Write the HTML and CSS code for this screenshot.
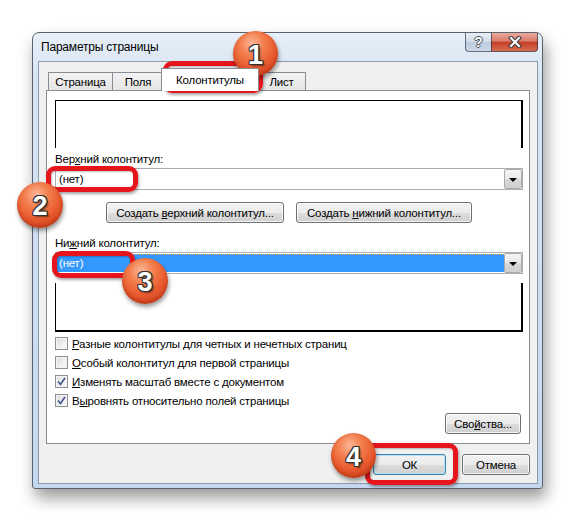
FILE: index.html
```html
<!DOCTYPE html>
<html lang="ru">
<head>
    <meta charset="UTF-8">
    <title>Параметры страницы</title>
    <link rel="stylesheet" href="styles.css">
</head>
<body>
    <div class="window">
        <div class="titlebar">
            <span class="title">Параметры страницы</span>
            <div class="caption-buttons">
                <button class="cap-btn help">?</button>
                <button class="cap-btn close">
                    <svg width="16" height="12" viewBox="0 0 16 12">
                        <path d="M4 2 L12 10 M12 2 L4 10" stroke="#3b3b3b" stroke-width="4.2" stroke-linecap="square"/>
                        <path d="M4 2 L12 10 M12 2 L4 10" stroke="#fff" stroke-width="2.2" stroke-linecap="square"/>
                    </svg>
                </button>
            </div>
        </div>
        <div class="client">
            <div class="tabs">
                <div class="tab tab-page">Страница</div>
                <div class="tab tab-fields">Поля</div>
                <div class="tab tab-hf active">Колонтитулы</div>
                <div class="tab tab-sheet">Лист</div>
            </div>
            <div class="panel">
                <div class="preview preview-top"></div>
                <div class="field-label">Вер<u>х</u>ний колонтитул:</div>
                <div class="select">
                    <span class="select-value">(нет)</span>
                    <span class="drop"></span>
                </div>
                <div class="create-row">
                    <button class="btn btn-create-top">Создать <u>в</u>ерхний колонтитул...</button>
                    <button class="btn btn-create-bottom">Создать <u>н</u>ижний колонтитул...</button>
                </div>
                <div class="field-label field-label-bottom">Ни<u>ж</u>ний колонтитул:</div>
                <div class="select focused">
                    <span class="select-value">(нет)</span>
                    <span class="drop"></span>
                </div>
                <div class="preview preview-bottom"></div>
                <div class="checks">
                    <div class="check"><span class="box"></span><span><u>Р</u>азные колонтитулы для четных и нечетных страниц</span></div>
                    <div class="check"><span class="box"></span><span><u>О</u>собый колонтитул для первой страницы</span></div>
                    <div class="check"><span class="box checked"><svg width="9" height="9" viewBox="0 0 9 9"><path d="M1 4.5 L3.5 7.5 L8 1" fill="none" stroke="#3d5589" stroke-width="1.6"/></svg></span><span><u>И</u>зменять масштаб вместе с документом</span></div>
                    <div class="check"><span class="box checked"><svg width="9" height="9" viewBox="0 0 9 9"><path d="M1 4.5 L3.5 7.5 L8 1" fill="none" stroke="#3d5589" stroke-width="1.6"/></svg></span><span>В<u>ы</u>ровнять относительно полей страницы</span></div>
                </div>
                <button class="btn btn-props">Сво<u>й</u>ства...</button>
            </div>
            <div class="footer">
                <button class="btn btn-ok">ОК</button>
                <button class="btn btn-cancel">Отмена</button>
            </div>
        </div>
    </div>

    <!-- callouts drawn over the dialog -->
    <div class="mark mark-1"></div>
    <div class="mark mark-2"></div>
    <div class="mark mark-3"></div>
    <div class="mark mark-4"></div>
    <div class="badge badge-1">1</div>
    <div class="badge badge-2">2</div>
    <div class="badge badge-3">3</div>
    <div class="badge badge-4">4</div>
</body>
</html>
```

FILE: styles.css
```css
* {
    box-sizing: border-box;
}
html, body {
    margin: 0;
    padding: 0;
}
body {
    width: 577px;
    height: 523px;
    overflow: hidden;
    background: #fff;
    font-family: "Liberation Sans", Arial, sans-serif;
    font-size: 11.5px;
    letter-spacing: -0.2px;
    color: #000;
}
button {
    font-family: inherit;
    font-size: inherit;
    letter-spacing: inherit;
    color: #000;
    padding: 0;
    cursor: default;
}

/* window frame */
.window {
    margin: 32px 0 0 32px;
    width: 511px;
    height: 457px;
    border: 1px solid #59626e;
    border-radius: 7px 7px 3px 3px;
    background: linear-gradient(to bottom, #e7eff8 0, #d8e5f3 40px, #c4d8ef 100%);
    box-shadow: 3px 9px 16px rgba(0, 0, 0, 0.4);
    display: flex;
    flex-direction: column;
}
.titlebar {
    height: 28px;
    display: flex;
    align-items: flex-start;
    padding: 0 4px 0 8px;
}
.title {
    line-height: 29px;
    font-size: 12px;
}
.caption-buttons {
    margin-left: auto;
    display: flex;
}
.cap-btn {
    height: 19px;
    border: 1px solid rgba(35, 45, 65, 0.65);
    border-top: none;
    display: flex;
    align-items: center;
    justify-content: center;
}
.help {
    width: 27px;
    border-radius: 0 0 0 4px;
    background: linear-gradient(to bottom, #e6edf5 0%, #d2dde9 48%, #bccbdc 52%, #cad8e8 100%);
    color: #fff;
    font-weight: bold;
    font-size: 14px;
    text-shadow: 1px 0 0 #4a4f58, -1px 0 0 #4a4f58, 0 1px 0 #4a4f58, 0 -1px 0 #4a4f58;
}
.close {
    width: 47px;
    margin-left: -1px;
    border-radius: 0 0 4px 0;
    background: linear-gradient(to bottom, #e9aa9c 0%, #d9796a 45%, #c4402a 52%, #d66c50 100%);
}

/* client area */
.client {
    height: 423px;
    margin: 0 4px 0 5px;
    border: 1px solid #8a99ac;
    background: #f0f0f0;
    padding: 6px 7px 0;
}
.tabs {
    height: 22px;
    display: flex;
    align-items: flex-end;
    padding-left: 2px;
}
.tab {
    height: 18px;
    line-height: 18px;
    text-align: center;
    border: 1px solid #898c95;
    border-bottom: none;
    background: linear-gradient(to bottom, #f3f3f3, #e4e4e4);
}
.tab-page {
    width: 65px;
}
.tab-fields {
    width: 52px;
    margin-left: -1px;
}
.tab-hf {
    width: 98px;
    margin-left: -3px;
    margin-right: -2px;
}
.tab-sheet {
    width: 49px;
}
.tab.active {
    position: relative;
    z-index: 1;
    height: 23px;
    line-height: 23px;
    margin-bottom: -1px;
    background: #fff;
}

.panel {
    height: 354px;
    border: 1px solid #898c95;
    background: #fff;
    padding: 9px 6px 0 8px;
    display: flex;
    flex-direction: column;
}
.preview {
    border: 0 solid #000;
}
.preview-top {
    height: 48px;
    border-width: 1px 2px 0 1px;
}
.preview-bottom {
    height: 49px;
    margin-top: 9px;
    border-width: 0 2px 2px 1px;
}
.field-label {
    margin-top: 3px;
    height: 17px;
    line-height: 17px;
}
.field-label-bottom {
    margin-top: 12px;
}
.select {
    height: 22px;
    border: 1px solid #abadb3;
    background: #fff;
    display: flex;
}
.select-value {
    flex: 1;
    padding-left: 3px;
    line-height: 21px;
}
.select.focused .select-value {
    margin: 1px 0 1px 1px;
    padding-left: 2px;
    line-height: 17px;
    background: #3399ff;
    color: #fff;
    border-top: 1px dotted #e5a35e;
}
.drop {
    width: 18px;
    border: 1px solid #a9abb0;
    border-radius: 2px;
    background: linear-gradient(to bottom, #f5f5f5 0%, #e9e9e9 50%, #d9d9d9 51%, #cfcfcf 100%);
    display: flex;
    align-items: center;
    justify-content: center;
}
.drop::after {
    content: "";
    border-top: 4px solid #000;
    border-left: 4px solid transparent;
    border-right: 4px solid transparent;
    margin-top: 1px;
}

/* push buttons */
.btn {
    height: 21px;
    border: 1px solid #707070;
    border-radius: 3px;
    background: linear-gradient(to bottom, #f2f2f2 0%, #ebebeb 50%, #dddddd 51%, #cfcfcf 100%);
    box-shadow: inset 0 0 0 1px rgba(255, 255, 255, 0.75);
    white-space: nowrap;
}
.create-row {
    margin-top: 12px;
    display: flex;
    justify-content: center;
    gap: 12px;
}
.btn-create-top {
    width: 178px;
}
.btn-create-bottom {
    width: 176px;
}
.btn-props {
    width: 76px;
    margin-top: 3px;
    margin-right: 2px;
    align-self: flex-end;
}

.checks {
    margin-top: 2px;
}
.check {
    height: 19px;
    display: flex;
    align-items: center;
}
.box {
    width: 13px;
    height: 13px;
    margin-right: 4px;
    border: 1px solid #8e8f8f;
    background: linear-gradient(135deg, #dadada 0%, #f0f0f0 60%, #fbfbfb 100%);
    box-shadow: inset 0 0 0 1px #f4f4f4;
    display: flex;
    align-items: center;
    justify-content: center;
}

.footer {
    margin-top: 10px;
    display: flex;
    justify-content: flex-end;
    gap: 16px;
}
.btn-ok {
    width: 73px;
    border-color: #3c7fb1;
    box-shadow: inset 0 0 0 1px #b6e1f8;
}
.btn-cancel {
    width: 68px;
}

/* annotation callouts */
.mark {
    position: absolute;
    border: 5px solid #e5151b;
    border-radius: 9px;
    box-shadow: 1px 2px 3px rgba(0, 0, 0, 0.35), inset 1px 1px 2px rgba(0, 0, 0, 0.25);
}
.mark-1 {
    left: 163px;
    top: 61px;
    width: 100px;
    height: 32px;
}
.mark-2 {
    left: 46px;
    top: 166px;
    width: 92px;
    height: 26px;
}
.mark-3 {
    left: 52px;
    top: 251px;
    width: 83px;
    height: 27px;
}
.mark-4 {
    left: 365px;
    top: 443px;
    width: 93px;
    height: 42px;
}
.badge {
    position: absolute;
    width: 46px;
    height: 46px;
    border-radius: 50%;
    background: radial-gradient(circle at 42% 28%, #fbb89b 0%, #f4804f 28%, #e85a2e 58%, #c83b18 92%);
    box-shadow: 1px 3px 4px rgba(0, 0, 0, 0.4), inset 0 -2px 4px rgba(130, 25, 0, 0.35);
    display: flex;
    align-items: center;
    justify-content: center;
    padding-top: 3px;
    font-weight: bold;
    font-size: 27px;
    letter-spacing: 0;
    color: #fff;
    text-shadow: 1px 0 0 #333, -1px 0 0 #333, 0 1px 0 #333, 0 -1px 0 #333,
                 1px 1px 0 #333, -1px -1px 0 #333, 1px -1px 0 #333, -1px 1px 0 #333,
                 2px 2px 2px rgba(0, 0, 0, 0.5);
}
.badge-1 {
    left: 233px;
    top: 31px;
    width: 45px;
    height: 45px;
}
.badge-2 {
    left: 17px;
    top: 182px;
}
.badge-3 {
    left: 122px;
    top: 258px;
}
.badge-4 {
    left: 331px;
    top: 433px;
    width: 45px;
    height: 45px;
}
```
